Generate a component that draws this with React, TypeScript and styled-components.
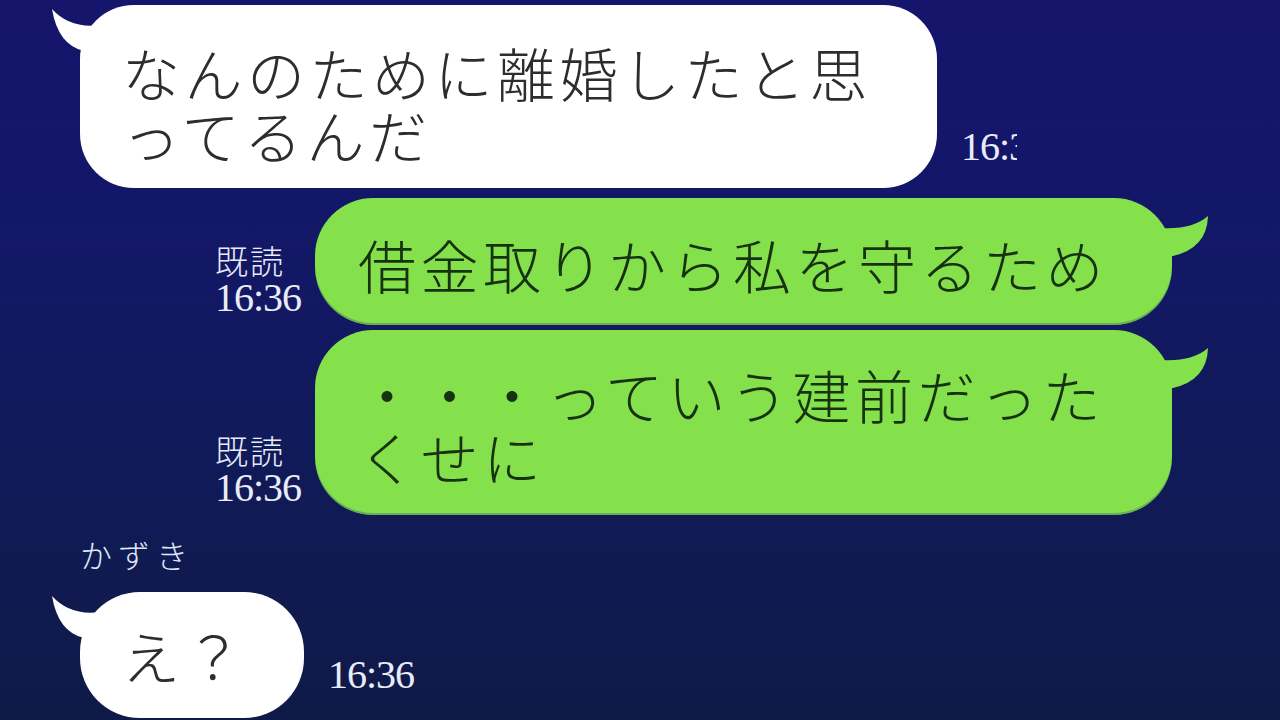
import styled, { createGlobalStyle } from 'styled-components';

type Side = 'in' | 'out';

const GlobalStyle = createGlobalStyle`
  html, body {
    margin: 0;
    padding: 0;
    background: #10195a;
  }
  * {
    box-sizing: border-box;
  }
`;

const CJK = `'Noto Sans CJK JP', 'Noto Sans', sans-serif`;
const SERIF = `'Liberation Serif', 'DejaVu Serif', serif`;

const MESSAGES: {
  side: Side;
  lines: string[];
  time: string;
  read?: boolean;
  width: number;
  pad: string;
  gap: number;
  clipTime?: boolean;
}[] = [
  {
    side: 'in',
    lines: ['なんのために離婚したと思', 'ってるんだ'],
    time: '16:36',
    width: 857,
    pad: '36px 42px 23px',
    gap: 0,
    clipTime: true,
  },
  {
    side: 'out',
    lines: ['借金取りから私を守るため'],
    time: '16:36',
    read: true,
    width: 857,
    pad: '35px 43px 30px',
    gap: 10,
  },
  {
    side: 'out',
    lines: ['・・・っていう建前だった', 'くせに'],
    time: '16:36',
    read: true,
    width: 857,
    pad: '33px 43px 28px',
    gap: 5,
  },
];

export default function App() {
  return (
    <>
      <GlobalStyle />
      <Screen>
        {MESSAGES.map((msg, i) => (
          <Row key={i} $side={msg.side} $gap={msg.gap}>
            {msg.side === 'out' && (
              <Meta $side='out'>
                {msg.read && <ReadMark>既読</ReadMark>}
                <Time>{msg.time}</Time>
              </Meta>
            )}
            <Bubble $side={msg.side} $width={msg.width} $pad={msg.pad}>
              <Tail side={msg.side} />
              {msg.lines.map((line) => (
                <Line key={line}>{line}</Line>
              ))}
            </Bubble>
            {msg.side === 'in' && (
              <Meta $side='in'>
                <Time $clip={msg.clipTime}>{msg.time}</Time>
              </Meta>
            )}
          </Row>
        ))}

        <SenderName>かずき</SenderName>

        <Row $side='in' $gap={18}>
          <Bubble $side='in' $width={224} $pad='32px 42px 32px' $round>
            <Tail side='in' />
            <Line>え？</Line>
          </Bubble>
          <Meta $side='in' $drop={24}>
            <Time>16:36</Time>
          </Meta>
        </Row>
      </Screen>
    </>
  );
}

function Tail({ side }: { side: Side }) {
  if (side === 'in') {
    return (
      <TailIn viewBox='0 0 60 70' width={60} height={70}>
        <path d='M 52 20 Q 22 24 4 4 Q 10 40 36 46 L 52 46 Z' />
      </TailIn>
    );
  }
  return (
    <TailOut viewBox='0 0 60 70' width={60} height={70}>
      <path d='M 8 30 Q 40 32 56 18 Q 55 50 21 58 L 8 58 Z' />
    </TailOut>
  );
}

const Screen = styled.main`
  width: 1280px;
  height: 720px;
  overflow: hidden;
  display: flex;
  flex-direction: column;
  padding-top: 5px;
  background: linear-gradient(
    180deg,
    #14156b 0%,
    #131768 30%,
    #111a5a 60%,
    #0f1a48 100%
  );
`;

const Row = styled.div<{ $side: Side; $gap: number }>`
  display: flex;
  align-items: flex-end;
  justify-content: ${({ $side }) =>
    $side === 'out' ? 'flex-end' : 'flex-start'};
  gap: ${({ $side }) => ($side === 'out' ? '14px' : '24px')};
  padding: ${({ $side }) => ($side === 'out' ? '0 108px 0 0' : '0 0 0 80px')};
  margin-top: ${({ $gap }) => $gap}px;
`;

const Bubble = styled.div<{
  $side: Side;
  $width: number;
  $pad: string;
  $round?: boolean;
}>`
  position: relative;
  width: ${({ $width }) => $width}px;
  padding: ${({ $pad }) => $pad};
  border-radius: ${({ $side, $round }) =>
    $round ? '60px' : $side === 'out' ? '58px' : '54px'};
  background: ${({ $side }) => ($side === 'out' ? '#84e14b' : '#ffffff')};
  color: ${({ $side }) => ($side === 'out' ? '#163210' : '#2d2d2d')};
  fill: ${({ $side }) => ($side === 'out' ? '#84e14b' : '#ffffff')};
  font-family: ${CJK};
  font-weight: 300;
  font-size: 58px;
  letter-spacing: 4.5px;
  line-height: 62px;
  white-space: nowrap;
  ${({ $side }) =>
    $side === 'out' && 'box-shadow: inset 0 -2px 0 rgba(90, 130, 100, 0.55);'}
`;

const Line = styled.div`
  position: relative;
`;

const TailIn = styled.svg`
  position: absolute;
  left: -32px;
  top: 0;
`;

const TailOut = styled.svg`
  position: absolute;
  right: -40px;
  top: 0;
`;

const Meta = styled.div<{ $side: Side; $drop?: number }>`
  display: flex;
  flex-direction: column;
  align-items: flex-start;
  margin-bottom: ${({ $side, $drop }) =>
    $drop ?? ($side === 'out' ? 8 : 22)}px;
  color: #e8ecf8;
`;

const ReadMark = styled.span`
  font-family: ${CJK};
  font-weight: 300;
  font-size: 33px;
  line-height: 38px;
  letter-spacing: 2px;
`;

const Time = styled.span<{ $clip?: boolean }>`
  font-family: ${SERIF};
  font-size: 40px;
  line-height: 38px;
  letter-spacing: -1px;
  white-space: nowrap;
  ${({ $clip }) => $clip && 'width: 56px; overflow: hidden;'}
`;

const SenderName = styled.div`
  margin: 19px 0 0 80px;
  font-family: ${CJK};
  font-weight: 300;
  font-size: 32px;
  line-height: 40px;
  letter-spacing: 6px;
  color: #dfe6f6;
`;
